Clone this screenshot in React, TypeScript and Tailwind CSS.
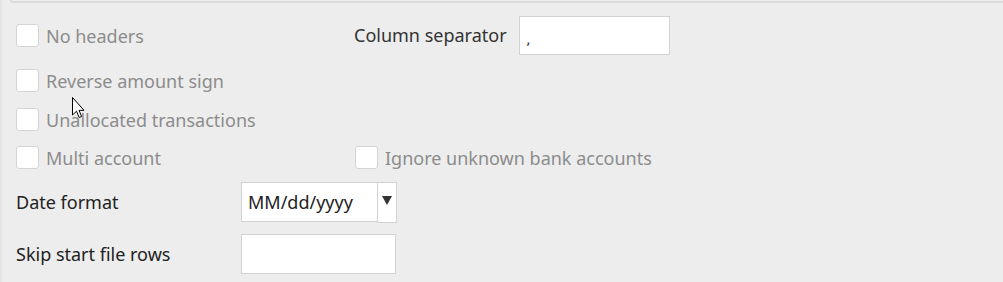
import React from "react";

const font = { fontFamily: '"Noto Sans", "Open Sans", sans-serif' };

function Check({ label }: { label: string }) {
  return (
    <div className="flex items-center">
      <div className="w-[23px] h-[23px] bg-white border border-[#d4d4d4] rounded-[3px]" />
      <span className="ml-[7px] text-[18px] text-[#8c8c8c] leading-none">{label}</span>
    </div>
  );
}

export default function App() {
  return (
    <div
      className="relative w-[1003px] h-[282px] bg-[#ededed] border-l-2 border-[#e4e4e4] overflow-hidden"
      style={font}
    >
      <div className="ml-[8px] h-[3px] border-b-2 border-l-2 border-[#dcdcdc] rounded-bl-[4px]" />
      <div className="pl-[14px] pt-[13px] flex flex-col">
        <div className="grid grid-cols-[338px_auto] h-[39px] items-center">
          <Check label="No headers" />
          <div className="flex items-center">
            <span className="text-[18px] text-[#333]">Column separator</span>
            <div className="ml-[12px] w-[151px] h-[39px] bg-white border border-[#d2d2d2] flex items-end pl-[7px] pb-[8px] text-[15px] text-[#333] leading-none">
              ,
            </div>
          </div>
        </div>
        <div className="mt-[14px] h-[23px]">
          <Check label="Reverse amount sign" />
        </div>
        <div className="mt-[16px] h-[23px]">
          <Check label="Unallocated transactions" />
        </div>
        <div className="mt-[15px] h-[23px] grid grid-cols-[339px_auto]">
          <Check label="Multi account" />
          <Check label="Ignore unknown bank accounts" />
        </div>
        <div className="mt-[13px] flex items-center h-[41px]">
          <span className="w-[225px] text-[18px] text-[#222]">Date format</span>
          <div className="flex h-[41px]">
            <div className="w-[136px] h-[40px] bg-white border border-[#d2d2d2] border-r-0 flex items-center pl-[6px] text-[18px] text-[#222]">
              MM/dd/yyyy
            </div>
            <div className="w-[20px] h-[41px] bg-white border border-[#d2d2d2] flex justify-center pt-[13px]">
              <svg width="10" height="9" viewBox="0 0 10 9">
                <path d="M0 0 L10 0 L5 9 Z" fill="#333" />
              </svg>
            </div>
          </div>
        </div>
        <div className="mt-[11px] flex items-center h-[40px]">
          <span className="w-[225px] text-[18px] text-[#222]">Skip start file rows</span>
          <div className="w-[155px] h-[40px] bg-white border border-[#d2d2d2]" />
        </div>
      </div>
      <svg
        className="absolute left-[69px] top-[96px]"
        width="14"
        height="24"
        viewBox="0 0 14 24"
      >
        <path
          d="M1.5 1.5 L1.5 19 L5.5 15.2 L8.2 21.5 L10.6 20.5 L8 14.3 L13 14.3 Z"
          fill="#fff"
          stroke="#000"
          strokeWidth="1"
          strokeLinejoin="miter"
        />
      </svg>
    </div>
  );
}
